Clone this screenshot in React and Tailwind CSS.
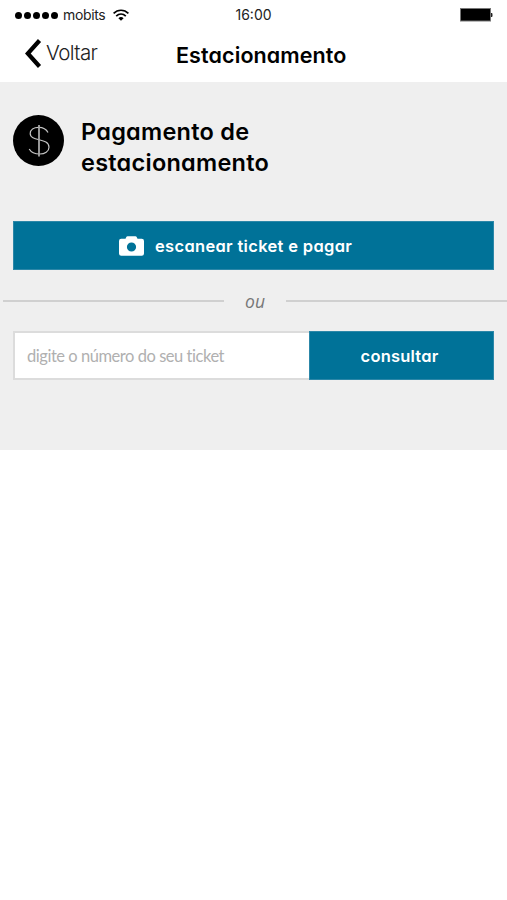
const rounded = "font-['Inter',sans-serif] [font-feature-settings:'cv11'] whitespace-nowrap";

function StatusBar() {
  return (
    <div className="flex h-[30px] items-center pl-[15px] pr-[14px] font-['Inter',sans-serif] text-[#222]">
      <div className="flex flex-1 items-center">
        <div className="flex gap-[2px]">
          {[0, 1, 2, 3, 4].map((i) => (
            <span key={i} className="size-[7px] rounded-full bg-black" />
          ))}
        </div>
        <span className="ml-[5px] text-[14px] leading-[20px] tracking-[-0.35px]">mobits</span>
        <svg className="ml-[8px]" width="16" height="12" viewBox="0 0 16 12" fill="none" stroke="#000" strokeWidth="1.7">
          <path d="M0.6 4.4C4.8.2 11.2.2 15.4 4.4" />
          <path d="M3.2 7.1C6 4.5 10 4.5 12.8 7.1" />
          <path d="M5.4 9.2C6.9 7.7 9.1 7.7 10.6 9.2L8 11.8Z" fill="#000" stroke="none" />
        </svg>
      </div>
      <span className="mr-px text-[14px] leading-[20px] tracking-[0px]">16:00</span>
      <div className="flex flex-1 justify-end">
        <svg width="33" height="14" viewBox="0 0 33 14">
          <rect x="0.5" y="0.5" width="30" height="12.5" fill="#000" stroke="#777" />
          <path d="M31 5h1.200q.8 2 0 4H31Z" fill="#222" />
        </svg>
      </div>
    </div>
  );
}

function NavBar() {
  return (
    <div className="flex h-[52px] items-start pl-[25px]">
      <svg className="mt-[9px]" width="17" height="29" viewBox="0 0 17 29" fill="none" stroke="#000" strokeWidth="4.2">
        <path d="M14.500 1.500 2.800 14.500 14.500 27.500" />
      </svg>
      <span className="ml-[4px] mt-[9px] w-[130px] font-['Inter',sans-serif] text-[20.500px] font-light leading-[28px] tracking-[-0.6px] text-[#222]">
        Voltar
      </span>
      <h1 className={`${rounded} mt-[11px] text-[21.500px] font-semibold leading-[28px] tracking-[0.1px] text-black`}>Estacionamento</h1>
    </div>
  );
}

export default function App() {
  return (
    <div className="min-h-screen w-full overflow-hidden bg-white">
      <StatusBar />
      <NavBar />
      <main className="h-[368px] bg-[#efefef] pt-[33px]">
        <div className="flex h-[106px] items-start pl-[13px]">
          <svg width="51" height="51" viewBox="0 0 51 51" fill="none">
            <circle cx="25.5" cy="25.5" r="25.5" fill="#000" />
            <path d="M35 17.5C33 13.5 29.5 12.3 25.7 12.3C20.7 12.3 17.2 14.8 17.2 18.5C17.2 27 36 22.5 36 32.2C36 36.6 31.7 39 26.8 39C22 39 18.2 37.6 16.2 34" stroke="#c4c4c4" strokeWidth="1.2" />
            <path d="M26 10v31.5" stroke="#a8a8a8" strokeWidth="1.8" />
          </svg>
          <h2 className={`${rounded} ml-[17px] mt-px text-[23.500px] font-semibold leading-[31px] tracking-[0.25px] text-black`}>
            Pagamento de
            <br />
            estacionamento
          </h2>
        </div>
        <button className="ml-[13px] flex h-[49px] w-[481px] items-center border border-[#2c87a8] bg-[#007298] pl-[105px] text-white">
          <svg width="25" height="20" viewBox="0 0 25 20" fill="#fff">
            <path fillRule="evenodd" d="M7.2 1.2Q7.6.2 8.6.2h7.8q1 0 1.4 1l.7 1.6h4.3q2.2 0 2.2 2.2v12.6q0 2.2-2.2 2.2H2.2Q0 19.800 0 17.600V5q0-2.200 2.200-2.200h4.300ZM12.500 6.400a4.600 4.600 0 1 0 0 9.200 4.600 4.600 0 0 0 0-9.200Z" />
          </svg>
          <span className={`${rounded} ml-[11px] text-[16.500px] font-semibold leading-[24px] tracking-[0.32px]`}>escanear ticket e pagar</span>
        </button>
        <div className="flex h-[61px] items-center pl-[3px]">
          <div className="h-[2px] w-[221px] bg-[#d0d0d0]" />
          <span className="w-[62px] text-center font-['Open_Sans',sans-serif] text-[17.500px] italic leading-[24px] text-[#777]">ou</span>
          <div className="h-[2px] flex-1 bg-[#d0d0d0]" />
        </div>
        <div className="ml-[13px] flex h-[49px] w-[481px]">
          <div className="flex w-[296px] items-center border-2 border-r-0 border-[#dcdcdc] bg-white pl-[12px] pt-[2px] font-['Lato',sans-serif] text-[16.500px] tracking-[-0.46px] text-[#b0b0b0]">
            <span className="whitespace-nowrap">digite o número do seu ticket</span>
          </div>
          <button className={`${rounded} flex-1 border border-[#2c87a8] bg-[#007298] pr-[4px] pt-px text-[16.500px] font-semibold tracking-[0.2px] text-white`}>consultar</button>
        </div>
      </main>
    </div>
  );
}
